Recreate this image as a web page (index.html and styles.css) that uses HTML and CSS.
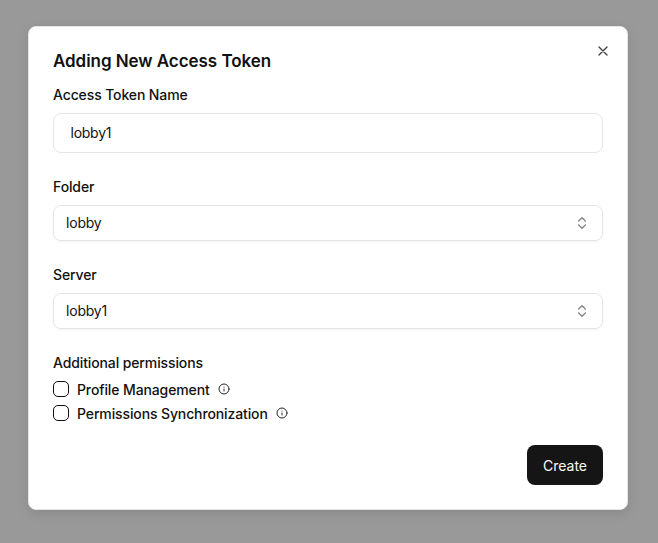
FILE: index.html
```html
<!DOCTYPE html>
<html lang="en">
<head>
<meta charset="utf-8">
<title>Adding New Access Token</title>
<link rel="stylesheet" href="styles.css">
</head>
<body>
<div class="overlay">
  <div class="modal">
    <button class="close" aria-label="Close">
      <svg width="16" height="16" viewBox="0 0 24 24" fill="none" stroke="currentColor" stroke-width="2" stroke-linecap="round"><path d="M18 6 6 18M6 6l12 12"/></svg>
    </button>
    <h2 class="title">Adding New Access Token</h2>
    <div class="field name-field">
      <label class="label">Access Token Name</label>
      <div class="input">lobby1</div>
    </div>
    <div class="field folder-field">
      <label class="label">Folder</label>
      <div class="select"><span class="value">lobby</span>
        <svg width="16" height="16" viewBox="0 0 24 24" fill="none" stroke="currentColor" stroke-width="2" stroke-linecap="round" stroke-linejoin="round"><path d="m7 15 5 5 5-5M7 9l5-5 5 5"/></svg>
      </div>
    </div>
    <div class="field server-field">
      <label class="label">Server</label>
      <div class="select"><span class="value">lobby1</span>
        <svg width="16" height="16" viewBox="0 0 24 24" fill="none" stroke="currentColor" stroke-width="2" stroke-linecap="round" stroke-linejoin="round"><path d="m7 15 5 5 5-5M7 9l5-5 5 5"/></svg>
      </div>
    </div>
    <div class="perms">
      <div class="label perms-label">Additional permissions</div>
      <div class="check-row"><span class="box"></span><span>Profile Management</span>
        <svg class="info" width="12" height="12" viewBox="0 0 24 24" fill="none" stroke="currentColor" stroke-width="2" stroke-linecap="round"><circle cx="12" cy="12" r="10"/><path d="M12 16v-4M12 8h.01"/></svg>
      </div>
      <div class="check-row"><span class="box"></span><span>Permissions Synchronization</span>
        <svg class="info" width="12" height="12" viewBox="0 0 24 24" fill="none" stroke="currentColor" stroke-width="2" stroke-linecap="round"><circle cx="12" cy="12" r="10"/><path d="M12 16v-4M12 8h.01"/></svg>
      </div>
    </div>
    <div class="footer"><button class="create">Create</button></div>
  </div>
</div>
</body>
</html>
```
FILE: styles.css
```css
* { box-sizing: border-box; }
html, body { margin: 0; height: 100%; }
body { font-family: Inter, "Liberation Sans", sans-serif; color: #111; background: #999; overflow: hidden; }
.overlay { min-height: 543px; padding: 26px 30px 0 28px; }
.modal { position: relative; width: 600px; height: 484px; background: #fff; border: 1px solid #e5e5e5; border-radius: 8px; padding: 24px 24px; box-shadow: 0 4px 12px rgba(0,0,0,.1); }
.close { position: absolute; top: 16px; right: 16px; width: 16px; height: 16px; padding: 0; border: 0; background: none; color: #404040; display: flex; }
.title { margin: 0; font-size: 17px; line-height: 20px; font-weight: 600; letter-spacing: -0.05px; }
.label { display: block; font-size: 14px; line-height: 20px; font-weight: 450; letter-spacing: -0.12px; }
.field { display: flex; flex-direction: column; gap: 8px; }
.name-field { margin-top: 14px; }
.folder-field { margin-top: 24px; }
.server-field { margin-top: 24px; }
.input { height: 40px; border: 1px solid #e5e5e5; border-radius: 8px; padding: 0 0 2px 16.5px; display: flex; align-items: center; font-size: 14px; font-weight: 400; letter-spacing: -0.25px; }
.select { height: 36px; border: 1px solid #e5e5e5; border-radius: 8px; padding: 0 12px; display: flex; align-items: center; justify-content: space-between; font-size: 14px; letter-spacing: -0.2px; box-shadow: 0 1px 2px rgba(0,0,0,.05); }
.value { margin-top: -2px; }
.select svg { color: #858585; }
.perms { margin-top: 24px; display: flex; flex-direction: column; gap: 4px; }
.perms-label { margin-bottom: 2px; }
.check-row { display: flex; align-items: center; height: 20px; font-size: 14px; font-weight: 450; letter-spacing: -0.12px; }
.box { width: 16px; height: 16px; border: 1.5px solid #111; border-radius: 5px; margin-right: 8px; }
.info { margin-left: 8px; color: #262626; }
.footer { margin-top: 22px; display: flex; justify-content: flex-end; }
.create { height: 40px; width: 76px; padding: 0; border: 0; border-radius: 8px; background: #151515; color: #fafafa; font: 400 14px Inter, "Liberation Sans", sans-serif; }
```
